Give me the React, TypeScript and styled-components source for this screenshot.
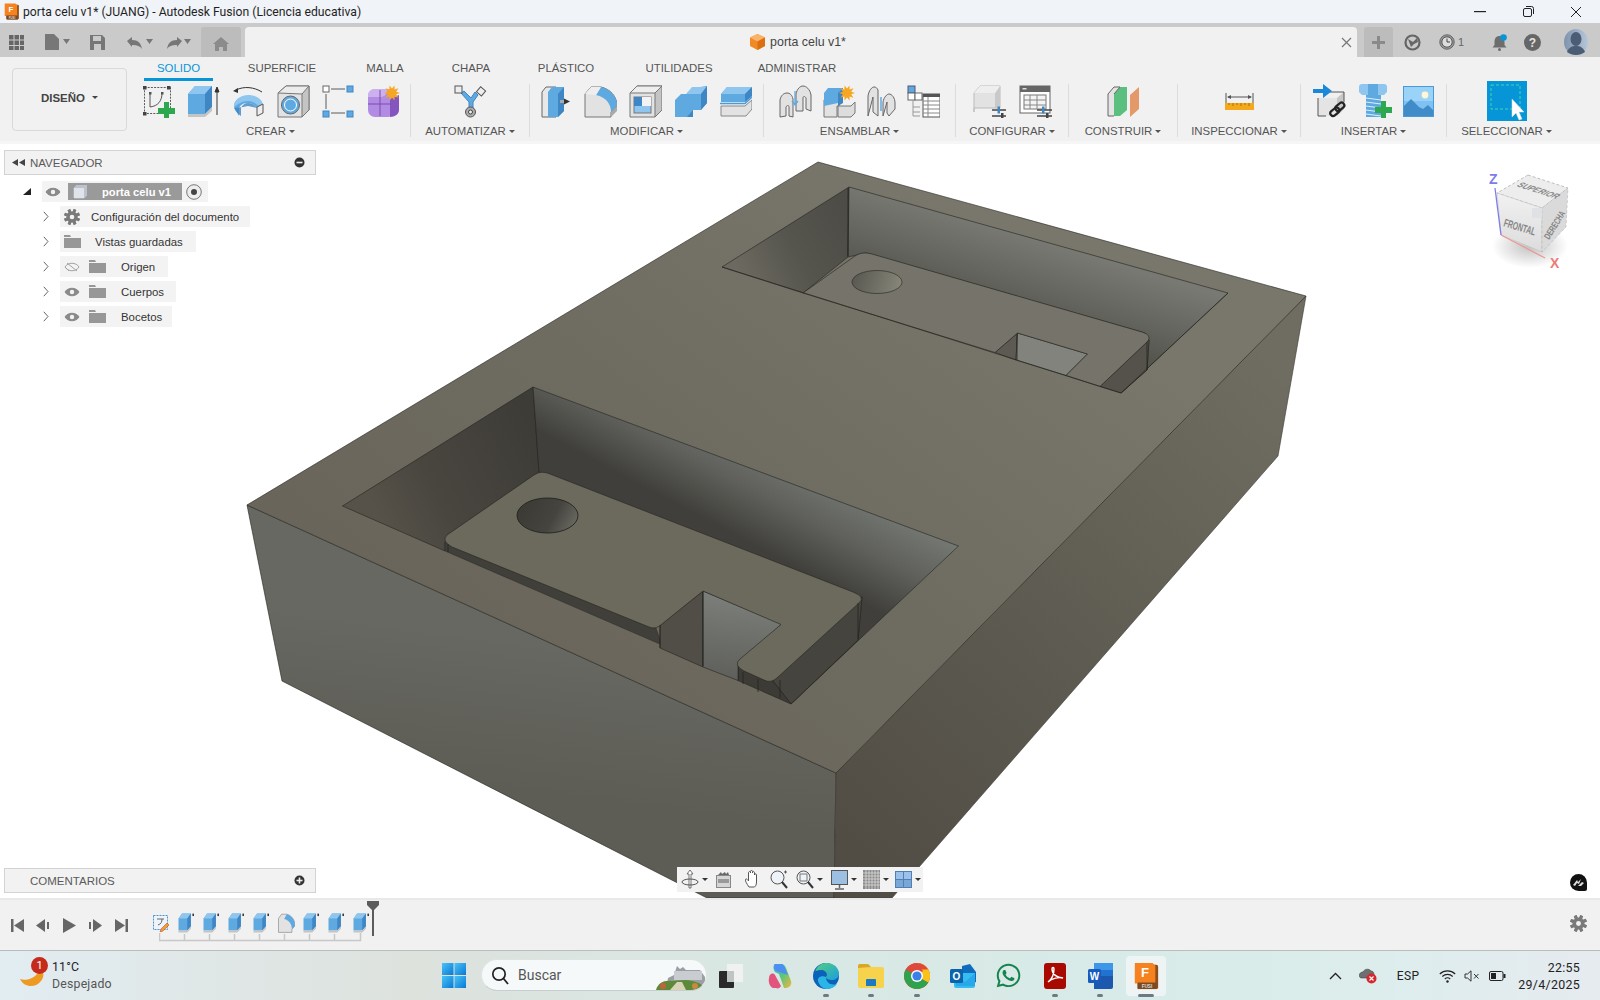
import React from "react";
import styled, { createGlobalStyle } from "styled-components";
import { FaWhatsapp } from "react-icons/fa";

const Global = createGlobalStyle`
  html, body { margin: 0; padding: 0; background: #fff; overflow: hidden; }
  * { box-sizing: border-box; }
  #root { width: 1600px; height: 1000px; }
`;
const Shell = styled.div`
  width: 1600px; height: 1000px; display: flex; flex-direction: column;
  font-family: "Liberation Sans", Arial, sans-serif; color: #444;
`;
const Title = styled.div`
  height: 23px; flex: none; background: #f0f3f7; display: flex; align-items: center; padding-left: 3px;
`;
const TitleText = styled.span`
  font: 12.2px/16px Roboto, sans-serif; color: #1f1f1f; margin-left: 3px;
`;
const WinButtons = styled.div`margin-left: auto; display: flex;`;
const WinButton = styled.div`width: 48px; height: 23px; display: flex; align-items: center; justify-content: center;`;
const TabStrip = styled.div`
  height: 34px; flex: none; background: #cacaca; padding-top: 4px; display: flex; align-items: stretch;
`;
const QuickIcons = styled.div`width: 201px; flex: none; display: flex; align-items: center; padding-left: 9px;`;
const Quick = styled.span<{ $w: number }>`width: ${p => p.$w}px; flex: none; display: flex; align-items: center;`;
const HomeTab = styled.div`width: 40px; flex: none; background: #bcbcbc; border-radius: 3px 3px 0 0; display: flex; align-items: center; justify-content: center; padding-top: 3px;`;
const DocTab = styled.div`
  margin-left: 4px; width: 1112px; flex: none; background: #f1f1f1; border-radius: 4px 4px 0 0; display: flex;
  align-items: center; justify-content: center; position: relative; padding-right: 6px;
`;
const DocName = styled.span`font-size: 12.4px; color: #444; margin-left: 5px;`;
const DocClose = styled.span`position: absolute; right: 5px; top: 10px; display: flex;`;
const PlusTab = styled.div`width: 29px; flex: none; margin-left: 7px; background: #bcbcbc; border-radius: 3px 3px 0 0; display: flex; align-items: center; justify-content: center;`;
const StatusIcons = styled.div`flex: 1; display: flex; align-items: center;`;
const StatusSlot = styled.span<{ $w: number; $pad?: number }>`
  width: ${p => p.$w}px; flex: none; display: flex; align-items: center; font-size: 11px; color: #666;
  ${p => (p.$pad !== undefined ? `padding-left: ${p.$pad}px;` : "justify-content: center;")}
`;
const Toolbar = styled.div`
  height: 87px; flex: none; background: #f1f1f1; display: flex; border-bottom: 3px solid #f6f6f6;
`;
const DesignButton = styled.div`
  margin: 11px 0 0 12px; width: 115px; height: 63px; flex: none; border: 1px solid #d9d9d9; border-radius: 4px; padding-bottom: 4px;
  display: flex; align-items: center; justify-content: center; gap: 7px; font-size: 11.5px; font-weight: 700; color: #444;
`;
const ToolArea = styled.div`margin-left: 4px; display: flex; flex-direction: column;`;
const ModeTabs = styled.div`height: 24px; display: flex; padding-left: 13px;`;
const ModeTab = styled.div<{ $w: number; $on?: boolean }>`
  width: ${p => p.$w}px; height: 24px; text-align: center; font-size: 11.4px; line-height: 23px;
  color: ${p => (p.$on ? "#0696d7" : "#555")}; border-bottom: 3px solid ${p => (p.$on ? "#0696d7" : "transparent")};
`;
const Groups = styled.div`display: flex; align-items: flex-start;`;
const Group = styled.div<{ $w: number; $last?: boolean }>`
  width: ${p => p.$w}px; height: 53px; margin-top: 3px; display: flex; flex-direction: column; align-items: center; flex: none;
  border-right: 1px solid ${p => (p.$last ? "transparent" : "#dcdcdc")};
`;
const IconRow = styled.div<{ $gap?: number }>`
  flex: none; height: 40px; margin-top: -3px; display: flex; align-items: center; gap: ${p => p.$gap ?? 12}px;
`;
const GroupLabel = styled.div`
  flex: none; margin-top: 3px; height: 14px; font-size: 11.4px; line-height: 14px; color: #555; display: flex; align-items: center; gap: 3px; white-space: nowrap;
`;
const Caret = styled.i<{ $c?: string; $s?: number }>`
  display: inline-block; width: 0; height: 0; flex: none; border-style: solid;
  border-width: ${p => p.$s ?? 4}px ${p => (p.$s ?? 4) - 0.5}px 0 ${p => (p.$s ?? 4) - 0.5}px;
  border-color: ${p => p.$c ?? "#555"} transparent transparent transparent;
`;
const Viewport = styled.div`flex: 1; position: relative; background: #fff; overflow: hidden;`;
const ModelSvg = styled.svg`position: absolute; left: 0; top: 0; display: block;`;
const PanelBar = styled.div<{ $bottom?: boolean }>`
  position: absolute; left: 4px; width: 312px; height: 25px; background: #f2f2f2; border: 1px solid #d3d3d3;
  display: flex; align-items: center; padding: 0 10px 0 7px; font-size: 11.5px; color: #5a5a5a;
  ${p => (p.$bottom ? "bottom: 5px;" : "top: 6px;")}
`;
const PanelTitle = styled.span<{ $pad: number }>`margin-left: ${p => p.$pad}px; flex: 1;`;
const Tree = styled.div`position: absolute; left: 20px; top: 37px; display: flex; flex-direction: column;`;
const TreeLine = styled.div`height: 25px; display: flex; align-items: flex-start; padding-left: 23px;`;
const TreeRootLine = styled(TreeLine)`padding-left: 2px;`;
const Expander = styled.span<{ $w: number }>`width: ${p => p.$w}px; height: 21px; display: flex; align-items: center; flex: none;`;
const TreeChip = styled.div<{ $w: number }>`
  width: ${p => p.$w}px; height: 21px; background: #f3f3f3; display: flex; align-items: center; font-size: 11.4px; color: #333; padding-left: 4px; flex: none;
`;
const ChipSlot = styled.span<{ $w: number; $start?: boolean }>`
  width: ${p => p.$w}px; flex: none; display: flex; align-items: center; justify-content: ${p => (p.$start ? "flex-start" : "center")};
`;
const ChipLabel = styled.span<{ $m: number }>`margin-left: ${p => p.$m}px; white-space: nowrap;`;
const Selected = styled.div`
  width: 114px; height: 17px; background: #9a9a9a; color: #fff; font-weight: 700; font-size: 11.2px; flex: none;
  display: flex; align-items: center; padding-left: 5px; margin-left: 8px;
`;
const Cube = styled.div`position: absolute; left: 1484px; top: 14px; width: 116px; height: 130px;`;
const NavBar = styled.div`
  position: absolute; left: 677px; top: 723px; width: 246px; height: 25px; background: #f2f2f2; display: flex; align-items: center; padding-left: 4px;
`;
const NavSlot = styled.span<{ $w: number }>`width: ${p => p.$w}px; flex: none; display: flex; align-items: center; gap: 3px;`;
const Bubble = styled.div`position: absolute; left: 1570px; top: 730px; width: 17px; height: 17px; background: #111; border-radius: 50% 50% 2px 50%; display: flex; align-items: center; justify-content: center;`;
const Timeline = styled.div`
  height: 52px; flex: none; background: #f1f1f1; border-top: 2px solid #e9e9e9; display: flex; align-items: center; position: relative;
`;
const Controls = styled.div`display: flex; width: 149px; padding-left: 4px; flex: none;`;
const ControlBtn = styled.span`width: 26px; height: 26px; flex: none; display: flex; align-items: center; justify-content: center;`;
const Track = styled.div`position: relative; display: flex; height: 36px; align-items: flex-start; padding-top: 5px; margin-top: 2px;`;
const TrackItem = styled.span`width: 25px; height: 20px; flex: none; display: flex; align-items: center; justify-content: center;`;
const Ruler = styled.svg`position: absolute; left: 10px; top: 25px;`;
const Marker = styled.svg`position: absolute; left: 217px; top: -7px;`;
const TimelineGear = styled.span`position: absolute; right: 13px; top: 15px; display: flex;`;
const Taskbar = styled.div`
  height: 50px; flex: none; display: flex; align-items: stretch; border-top: 1px solid #b9bebd;
  background: linear-gradient(90deg, #e2edf2 0%, #e0e8e9 10%, #dde2dd 26%, #d9e7e3 45%, #d8ebe8 70%, #dcedec 85%, #e6ebf0 100%);
`;
const Weather = styled.div`width: 431px; flex: none; padding-left: 20px; display: flex; align-items: center; position: relative;`;
const WeatherText = styled.div`margin-left: 7px; font: 12.3px/17px Roboto, sans-serif; color: #222; letter-spacing: .2px;`;
const WeatherSub = styled.div`color: #555;`;
const WeatherBadge = styled.span`
  position: absolute; left: 31px; top: 6px; width: 17px; height: 17px; border-radius: 50%; background: #c42b1c; color: #fff;
  font: 11px/17px Roboto, sans-serif; text-align: center;
`;
const TaskCell = styled.span<{ $w: number; $active?: boolean }>`
  width: ${p => p.$w}px; flex: none; position: relative; display: flex; align-items: center; justify-content: center;
  ${p => (p.$active ? "&::before{content:'';position:absolute;left:3px;right:3px;top:5px;bottom:4px;background:#eef4f4;border-radius:4px;}" : "")}
  & > * { position: relative; }
`;
const RunDot = styled.i<{ $w?: number }>`
  position: absolute !important; bottom: 3px; left: 50%; width: ${p => p.$w ?? 6}px; margin-left: ${p => -(p.$w ?? 6) / 2}px; height: 3px; border-radius: 2px; background: #6e7a82;
`;
const Search = styled.div`
  width: 226px; flex: none; margin: 8px 0 9px 4px; background: #f5f9f9; border-radius: 16px; border: 1px solid #dde5e4; border-bottom-color: #c6cfcd;
  display: flex; align-items: center; padding-left: 9px; position: relative; overflow: hidden;
`;
const SearchText = styled.span`margin-left: 9px; font: 14px Roboto, sans-serif; color: #555;`;
const SearchArt = styled.svg`position: absolute; right: 0; bottom: 0;`;
const TaskGap = styled.span`width: 2px; flex: none;`;
const Tray = styled.div`flex: 1; display: flex; align-items: center; padding-left: 154px; min-width: 0;`;
const TraySlot = styled.span<{ $w: number; $m?: number }>`
  width: ${p => p.$w}px; margin-left: ${p => p.$m ?? 0}px; flex: none; display: flex; align-items: center; justify-content: center;
  font: 12px Roboto, sans-serif; color: #222; letter-spacing: .4px;
`;
const Clock = styled.div`flex: 1; text-align: right; padding-right: 20px; font: 12.4px/17px Roboto, sans-serif; color: #222; letter-spacing: .3px;`;
const WordMark = styled.text`font: 700 10px "Liberation Sans", sans-serif;`;

const I: React.FC<{ w?: number; h?: number; vb?: string; stretch?: boolean; children: React.ReactNode }> = ({ w = 33, h = 33, vb, stretch, children }) => (
  <svg width={w} height={h} viewBox={vb ?? `0 0 ${w} ${h}`} preserveAspectRatio={stretch ? "none" : undefined} style={{ flex: "none", display: "block" }}>{children}</svg>
);
const B = "#5fa9e1", BD = "#3f86c4", BL = "#8fc6ef", G1 = "#e2e2e2", G2 = "#c4c4c4", G3 = "#a9a9a9", S = "#5b5b5b";

const SketchI = () => <I>
  <rect x="2.5" y="2.5" width="26" height="26" fill="none" stroke={S} strokeDasharray="2 1.2" />
  {[[1,1],[25,1],[1,27]].map(([x,y],k)=><rect key={k} x={x} y={y} width="3.5" height="3.5" fill="#444"/>)}
  <rect x="7" y="7" width="2.5" height="2.5" fill="#555"/><rect x="19" y="7" width="2.5" height="2.5" fill="#555"/>
  <path d="M8 8v14M8 22c8-1 12-6 12-14" fill="none" stroke="#555"/>
  <path d="M22 17h5v6h6v6h-6v4h-5v-4h-6v-6h6z" fill="#2ea84f"/>
</I>;
const ExtrudeI = () => <I>
  <path d="M1 29V9l7-8h17v21l-7 7z" fill={B}/><path d="M1 9l7-8h17l-7 8z" fill={BL}/><path d="M18 9l7-8v21l-7 7z" fill={BD}/>
  <path d="M1 29h17l7-7v4l-7 6H1z" fill={G2}/>
  <path d="M30 30V3M28 7l2-5 2 5z" stroke="#333" fill="#333"/>
</I>;
const RevolveI = () => <I>
  <path d="M2 22c0-7 6-11 14-11s14 4 14 10l-5 2c-2-3-5-5-9-5s-7 1-9 5v8z" fill={B}/>
  <path d="M2 22c-1-6 6-12 14-12 7 0 13 3 15 9l-5 2c-2-3-6-5-10-5-6 0-10 3-14 6z" fill={BL}/>
  <path d="M2 23c2 4 4 6 7 8l0-8c1-3 4-5 7-5 4 0 7 2 9 5v0l-9-2-5 1z" fill={BD} opacity=".8"/>
  <path d="M25 22l6-3v9l-6 3z" fill="#eee" stroke="#555"/>
  <path d="M4 5c8-4 18-3 26 2" fill="none" stroke="#333"/><path d="M1 6l5-3v5z" fill="#333"/>
</I>;
const HoleI = () => <I>
  <path d="M1 8l8-7h23v24l-7 7H1z" fill={G1} stroke="#777"/><path d="M25 8l7-7v24l-7 7z" fill={G2} stroke="#777"/><path d="M1 8l8-7h23l-7 8z" fill="#ececec" stroke="#777"/>
  <circle cx="13.5" cy="20" r="9" fill={B} stroke="#666"/><path d="M12 12a9 9 0 0 1 9 11 9 9 0 0 0-9-11z" fill="#eee"/><circle cx="13.5" cy="20" r="6" fill="none" stroke="#fff"/>
</I>;
const NodesI = () => <I>
  <path d="M9 4h14M4 9v15M9 28h14" stroke={S}/>
  <rect x="1" y="1" width="6" height="6" fill="#fff" stroke="#666"/>
  <rect x="25" y="1" width="6" height="6" fill={B} stroke={BD}/><rect x="1" y="26" width="6" height="6" fill={B} stroke={BD}/><rect x="25" y="26" width="6" height="6" fill={B} stroke={BD}/>
</I>;
const Star = ({ x, y, r = 7, c = "#f5a623" }: { x: number; y: number; r?: number; c?: string }) => {
  const pts = Array.from({ length: 20 }, (_, k) => { const a = k * Math.PI / 10; const q = k % 2 ? r * .55 : r; return `${x + q * Math.cos(a)},${y + q * Math.sin(a)}`; }).join(" ");
  return <polygon points={pts} fill={c} />;
};
const FormI = () => <I>
  <rect x="1" y="4" width="27" height="28" rx="7" fill="#b28ce2"/><path d="M1 11c0-5 3-7 8-7h12c-1 6-4 8-8 8H1z" fill="#cdb1ee"/><path d="M23 14l9-4v15c0 4-4 7-9 7z" fill="#8555bf"/>
  <path d="M1 19h23M13 5v26" stroke="#7a4bb0"/><Star x={25} y={8} r={8}/>
</I>;
const AutoI = () => <I>
  <path d="M7 8l8 9v7h4v-7l5-7-3-3-4 6-7-7z" fill={B} stroke={BD}/>
  <rect x="1" y="1" width="7" height="7" fill="#eee" stroke="#555"/><rect x="24" y="3" width="6.5" height="6.5" fill="#eee" stroke="#555" transform="rotate(40 27 6)"/>
  <circle cx="16.5" cy="27" r="5" fill="#aaa" stroke="#555"/><circle cx="16.5" cy="27" r="2" fill="#eee" stroke="#444"/>
</I>;
const PressI = () => <I w={31}>
  <path d="M1 32V7l4-5h10v30z" fill="#e8e8e8" stroke="#666"/><path d="M7 32V7l4-5h12v24l-6 6z" fill={B}/><path d="M17 9l6-7v24l-6 6z" fill={BD}/>
  <rect x="19" y="15" width="7" height="3" fill="#aaa"/><path d="M23 13.5l6 3-6 3z" fill="#333"/>
</I>;
const FilletI = () => <I>
  <path d="M1 32V9l6-7h10c9 2 16 9 16 19l-6 6v5z" fill={G1} stroke="#777"/>
  <path d="M17 2c9 2 16 9 16 19l-6 6c0-8-5-15-15-17z" fill={B}/><path d="M27 27v5l6-6v-5z" fill={G3}/><path d="M1 9l6-7h10l-5 8z" fill="#eee"/>
</I>;
const ShellI = () => <I>
  <path d="M1 8l7-7h25v24l-7 7H1z" fill={G1} stroke="#777"/><path d="M26 8l7-7v24l-7 7z" fill={G2} stroke="#777"/><path d="M1 8l7-7h25l-7 7z" fill="#eee" stroke="#777"/>
  <rect x="5" y="12" width="17" height="16" fill={BL} stroke="#777"/><path d="M5 12h8v9H5v7z" fill={BD}/><rect x="13" y="12" width="9" height="9" fill="#f3f3f3"/>
</I>;
const CombineI = () => <I>
  <path d="M1 32V15l6-6h11V2h8l7-1v17l-6 7H19v7z" fill={B}/><path d="M12 9l6-7h15l-6 7z" fill={BL}/><path d="M27 9l6-8v17l-6 7zM13 32l6-7v7z" fill={BD}/>
</I>;
const SplitI = () => <I>
  <path d="M2 9l6-7h25v9l-7 6H2z" fill={B}/><path d="M2 9l6-7h25l-7 7z" fill={BL}/><path d="M26 9l7-7v9l-7 6z" fill={BD}/>
  <path d="M2 21h24l7-6v9l-6 7H2z" fill={G1} stroke="#888"/><path d="M1 18.5h25l7-6.5" fill="none" stroke="#4a9ad8" strokeWidth="1.4"/>
</I>;
const JointBase = () => <>
  <path d="M1 32V15c1-5 4-7 7-7s5 2 6 6v18l-4-1v-9c0-2-2-2-3 0v9z" fill={G1} stroke="#666"/>
  <path d="M17 26V9c1-5 4-8 7-8 3 0 7 3 8 9v16l-5-2V13c-1-2-3-2-3 0v13z" fill={G1} stroke="#666"/>
</>;
const JointI = () => <I><JointBase/><path d="M16 6v13M13 16l3 4 3-4" stroke={B} fill="none" strokeWidth="1.3"/></I>;
const NewCompI = () => <I>
  <path d="M1 32V15l4-5h11v11h-2v11z" fill={G1} stroke="#777"/><path d="M15 32V21h13l4-4v11l-4 4z" fill="#ddd" stroke="#777"/>
  <path d="M1 21V8l4-5h15v15h-5z" fill={B}/><path d="M15 8l5-5v15l-5 3z" fill={BD}/><Star x={24} y={8} r={8}/>
</I>;
const RigidI = () => <I w={29}>
  <path d="M1 31V11c1-6 4-9 6-9s3 1 4 3v26l-5-4V12z" fill={G1} stroke="#666"/>
  <path d="M16 31V17c1-5 4-8 6-8 3 0 6 4 6 9v6l-6 7-2-3V17z" fill={G1} stroke="#666"/><path d="M14 12v14" stroke={B} strokeWidth="1.5"/>
</I>;
const TableI = () => <I>
  <rect x="1" y="1" width="7" height="7" fill={B} stroke="#557"/><rect x="1" y="8" width="7" height="7" fill="#fff" stroke="#666"/><rect x="8" y="8" width="7" height="7" fill="#fff" stroke="#666"/>
  <path d="M6 15v16h7M6 22h7M6 27h7" fill="none" stroke="#999"/>
  <rect x="16" y="9" width="17" height="23" fill="#fff" stroke="#555"/><rect x="16" y="9" width="17" height="3" fill="#555"/><path d="M16 16h17M16 20h17M16 24h17M16 28h17M21 12v20" stroke="#888"/>
</I>;
const ParamI = () => <I>
  <path d="M1 27V8l6-7h20v22H1z" fill="#e2e2e2" stroke="#bbb"/><path d="M22 8l5-7v22h-5z" fill="#c9c9c9"/><path d="M1 8l6-7h20l-5 7z" fill="#eee"/>
  <path d="M19 25h15M19 31h15" stroke="#444" strokeWidth="1.4"/><rect x="24.5" y="21.5" width="2.5" height="7" fill={BD}/><rect x="28" y="28" width="2.5" height="5" fill="#444"/>
</I>;
const ParamTableI = () => <I>
  <rect x="1" y="1" width="30" height="27" fill="#fff" stroke="#666"/><rect x="1" y="1" width="30" height="6" fill="#666"/><rect x="3.5" y="3" width="4" height="1.5" fill="#ddd"/>
  <rect x="5" y="10" width="22" height="14" fill="#f4f4f4" stroke="#777"/><path d="M5 15h22M5 20h22M11 10v14M18 10v14" stroke="#888"/>
  <path d="M18 25h15M18 31h15" stroke="#444" strokeWidth="1.4"/><rect x="23" y="21.5" width="2.5" height="7" fill={BD}/><rect x="27" y="28" width="2.5" height="5" fill="#444"/>
</I>;
const PlaneI = () => <I>
  <path d="M1 31V9l6-7h6v22l-6 7z" fill="#e4e4e4" stroke="#666"/><path d="M7 31V9h0l6-7h7v23l-7 6z" fill="#5bbf7f"/><path d="M7 9l6-7" stroke="#666"/>
  <path d="M23 32V10l9-8v22z" fill="#e49a68"/>
</I>;
const MeasureI = () => <I w={29} h={18}>
  <path d="M1 1v10M28 1v10M3 5h23" stroke="#555"/><path d="M2 5l4-2v4zM27 5l-4-2v4z" fill="#555"/>
  <rect x="0" y="11" width="29" height="7" fill="#f5a81c"/><path d="M4 11v2M8 11v3M12 11v2M16 11v3M20 11v2M24 11v3" stroke="#8a5a00" strokeWidth=".7"/>
</I>;
const LinkI = () => <I w={35} h={34}>
  <path d="M5 32V14l7-6h19v17l-7 7z" fill="#e4e4e4"/><path d="M5 14l7-6h19l-7 6z" fill="#f0f0f0"/><path d="M24 14l7-6v17l-7 7z" fill="#c7c7c7"/><path d="M5 14v18h8" fill="none" stroke="#555"/><path d="M12 8h19v10" fill="none" stroke="#555"/>
  <path d="M0 5h10V0l9 7-9 7V9H0z" fill="#1b87d8"/>
  <g fill="none" stroke="#222" strokeWidth="2.2"><rect x="17" y="25" width="10" height="5.5" rx="2.7" transform="rotate(-40 22 28)"/><rect x="22" y="20" width="10" height="5.5" rx="2.7" transform="rotate(-40 27 23)"/></g>
</I>;
const BoltI = () => <I h={34}>
  <path d="M0 3q0-3 3-3h22q3 0 3 3v5l-3 3H3l-3-3z" fill={BL}/><path d="M9 0h10v11H9z" fill={B}/><rect x="7" y="11" width="15" height="22" fill={B}/>
  <path d="M7 14l15 2M7 18l15 2M7 22l15 2M7 26l15 2M7 30l15 2" stroke="#dcefff"/><path d="M22 17h5v6h6v6h-6v5h-5v-5h-6v-6h6z" fill="#2ea84f"/>
</I>;
const PictureI = () => <I w={31} h={31}>
  <rect width="31" height="31" fill="#7fc1f2"/><rect y="0" width="31" height="15" fill="#9bd2f8"/><circle cx="22" cy="9" r="3.4" fill="#fff7d5"/>
  <path d="M0 31V21l8-8 8 8 4 2 5-4 6 6v6z" fill="#3f8cc9"/><rect x=".5" y=".5" width="30" height="30" fill="none" stroke="#4a9ad8"/>
</I>;
const SelectI = () => <I w={40} h={40}>
  <rect width="40" height="40" fill="#0696d7"/><rect x="4" y="4" width="29" height="24" fill="none" stroke="#46d3b0" strokeDasharray="3 2"/>
  <path d="M25 18v18l4-4 3 7 3-1-3-7h5z" fill="#fff" stroke="#ddd" strokeWidth=".5"/>
</I>;

const Eye = ({ off, c = "#8a8a8a" }: { off?: boolean; c?: string }) => <I w={16} h={10}>
  <path d="M1 5c3-5 11-5 14 0-3 5-11 5-14 0z" fill={off ? "none" : c} stroke={off ? "#a4a4a4" : c}/>
  {off ? <path d="M3 1l10 8M1 5l4 4" stroke="#a4a4a4" fill="none"/> : <circle cx="8" cy="5" r="2.2" fill="#f3f3f3"/>}
</I>;
const Folder = () => <I w={17} h={13}><path d="M0 0h6l1 2h10v11H0z" fill="#979797"/><rect y="2" width="17" height="1" fill="#f3f3f3"/></I>;
const Chev = () => <I w={6} h={11}><path d="M.8 .8l4.2 4.7-4.2 4.7" fill="#fff" stroke="#555" strokeWidth=".9"/></I>;
const Gear = ({ s = 16, c = "#7a7a7a" }: { s?: number; c?: string }) => {
  const teeth = Array.from({ length: 8 }, (_, k) => <rect key={k} x="6.6" y="0" width="2.8" height="16" fill={c} transform={`rotate(${k * 45 + 22} 8 8)`} />);
  return <I w={s} h={s} vb="0 0 16 16">{teeth}<circle cx="8" cy="8" r="5.6" fill={c}/><circle cx="8" cy="8" r="2.3" fill="#f2f2f2"/></I>;
};
const CircleBtn = ({ plus }: { plus?: boolean }) => <I w={11} h={11}><circle cx="5.5" cy="5.5" r="5" fill="#333"/><rect x="2.5" y="4.7" width="6" height="1.6" fill="#eee"/>{plus && <rect x="4.7" y="2.5" width="1.6" height="6" fill="#eee"/>}</I>;
const FilletShapes = () => <><path d="M1 32V9l6-7h10c9 2 16 9 16 19l-6 6v5z" fill={G1} stroke="#777"/><path d="M17 2c9 2 16 9 16 19l-6 6c0-8-5-15-15-17z" fill={B}/></>;
const Mini = ({ fillet }: { fillet?: boolean }) => <I w={17} h={20} vb="0 0 33 33" stretch>
  {fillet ? <FilletShapes/> : <><path d="M1 29V9l7-8h17v21l-7 7z" fill={B}/><path d="M1 9l7-8h17l-7 8z" fill={BL}/><path d="M18 9l7-8v21l-7 7z" fill={BD}/><path d="M1 29h17l7-7v4l-7 6H1z" fill={G2}/><rect x="28" y="1" width="3" height="4" fill="#333"/></>}
</I>;

const Model = () => (
  <ModelSvg width="1600" height="754" viewBox="0 144 1600 754">
    <defs>
      <linearGradient id="top" gradientUnits="userSpaceOnUse" x1="950" y1="200" x2="560" y2="720">
        <stop offset="0" stopColor="#79776c"/><stop offset=".55" stopColor="#6e6c61"/><stop offset="1" stopColor="#6a655a"/>
      </linearGradient>
      <linearGradient id="lf" gradientUnits="userSpaceOnUse" x1="520" y1="640" x2="500" y2="790">
        <stop offset="0" stopColor="#676862"/><stop offset="1" stopColor="#5d5c55"/>
      </linearGradient>
      <linearGradient id="rf" gradientUnits="userSpaceOnUse" x1="1290" y1="380" x2="850" y2="850">
        <stop offset="0" stopColor="#6f6c61"/><stop offset=".6" stopColor="#5c5950"/><stop offset="1" stopColor="#514d45"/>
      </linearGradient>
      <linearGradient id="back1" gradientUnits="userSpaceOnUse" x1="770" y1="445" x2="725" y2="530">
        <stop offset="0" stopColor="#757873"/><stop offset=".5" stopColor="#5f605b"/><stop offset="1" stopColor="#403f3b"/>
      </linearGradient>
      <linearGradient id="left1" gradientUnits="userSpaceOnUse" x1="375" y1="510" x2="535" y2="430">
        <stop offset="0" stopColor="#565249"/><stop offset=".35" stopColor="#494640"/><stop offset="1" stopColor="#3e3c37"/>
      </linearGradient>
      <linearGradient id="back2" gradientUnits="userSpaceOnUse" x1="1040" y1="240" x2="1015" y2="320">
        <stop offset="0" stopColor="#787972"/><stop offset=".6" stopColor="#63645d"/><stop offset="1" stopColor="#54544d"/>
      </linearGradient>
      <linearGradient id="left2" gradientUnits="userSpaceOnUse" x1="740" y1="275" x2="850" y2="220">
        <stop offset="0" stopColor="#6c6a60"/><stop offset=".5" stopColor="#55544d"/><stop offset="1" stopColor="#4d4c46"/>
      </linearGradient>
      <linearGradient id="notch" gradientUnits="userSpaceOnUse" x1="730" y1="590" x2="720" y2="680">
        <stop offset="0" stopColor="#7d807c"/><stop offset="1" stopColor="#5e5f5a"/>
      </linearGradient>
      <linearGradient id="hole" gradientUnits="userSpaceOnUse" x1="520" y1="500" x2="575" y2="530">
        <stop offset="0" stopColor="#3a3934"/><stop offset=".6" stopColor="#45443f"/><stop offset="1" stopColor="#6c6c64"/>
      </linearGradient>
      <linearGradient id="hole2" gradientUnits="userSpaceOnUse" x1="855" y1="275" x2="900" y2="290">
        <stop offset="0" stopColor="#5b5a52"/><stop offset="1" stopColor="#878679"/>
      </linearGradient>
    </defs>
    <g stroke="#23231f" strokeWidth=".6" strokeLinejoin="round">
      <polygon points="247,505 836,773 834,898 707,898 282,681" fill="url(#lf)"/>
      <polygon points="836,773 1306,296 1278,456 892,898 834,898" fill="url(#rf)" stroke="#3a3831"/>
      <polygon points="818,162 1306,296 836,773 247,505" fill="url(#top)"/>

      <polygon points="533,387 342.5,506 445,551 445,542 539,472" fill="url(#left1)"/>
      <polygon points="533,387 958.5,546 791,704 858,640 862,597 539,472" fill="url(#back1)"/>
      <polygon points="445,542 656,628 662,645 445,551" fill="#403f3a" strokeWidth=".4"/>
      <polygon points="862,597 858,640 791,704 773,681" fill="#46443e"/>
      <polygon points="738,665 773,681 791,704 738,680.5" fill="#3c3b36"/>
      <polygon points="703,591 660,625 660,648 703,667" fill="#504e47"/>
      <polygon points="703,591 782,624 738,665 738,680.5 703,667" fill="url(#notch)"/>
      <path d="M550,474 L853,592 Q866,597 859,603 L778,677 Q771,684 764,680 L744,671 Q733,665 740,659 L781,624.5 L703,591 L662,624 Q656,630 649,627 L452,547 Q441,541 447,535 L534,475 Q541,470 550,474 Z" fill="#6c695d"/>
      <path d="M703,592V666M660,625v23M743,672v12M758,679v13M780,680v18M858,603v36M448,544v8" fill="none" strokeWidth=".8"/>
      <ellipse cx="547.5" cy="515.5" rx="30.5" ry="17.5" fill="url(#hole)" strokeWidth=".9"/>

      <polygon points="849,187 722,267 803,293 848,257" fill="url(#left2)"/>
      <polygon points="849,187 1228,293 1121,393 1147,370 1149,340 1145,333 866,253 848,257" fill="url(#back2)"/>
      <polygon points="1149,340 1147,370 1121,393 1100,386.5" fill="#54524b"/>
      <polygon points="1017.5,333 995,352.5 1016,360" fill="#5c5a53"/>
      <polygon points="1017.5,333 1087.5,354 1066,375.5 1016,360" fill="#81837c"/>
      <path d="M803,293 L855,256 Q862,251 872,254 L1142,332 Q1152,335 1148,341 L1100,386.5 L1066,375.5 L1087.5,354 L1017.5,333 L995,352.5 Z" fill="#75736a"/>
      <polyline points="722,267 1121,393 1228,293" fill="none"/>
      <path d="M848,188V256M1017,334v26M1147,342v28" fill="none" strokeWidth=".8"/>
      <ellipse cx="877" cy="282" rx="25" ry="11.5" fill="url(#hole2)"/>
    </g>
  </ModelSvg>
);

const ViewCube = () => (
  <Cube>
    <svg width="116" height="130" viewBox="1484 158 116 130">
      <defs>
        <radialGradient id="shd"><stop offset="0" stopColor="#777" stopOpacity=".45"/><stop offset="1" stopColor="#777" stopOpacity="0"/></radialGradient>
        <linearGradient id="cf" x1="0" y1="0" x2="0" y2="1"><stop offset="0" stopColor="#f1f1f1"/><stop offset="1" stopColor="#dcdcdc"/></linearGradient>
      </defs>
      <ellipse cx="1530" cy="246" rx="38" ry="22" fill="url(#shd)"/>
      <polygon points="1528,175 1568,188 1542,208 1497,193" fill="#ededed" stroke="#999" strokeDasharray="3 2" strokeWidth=".6"/>
      <polygon points="1497,193 1542,208 1542,252 1501,235" fill="url(#cf)" stroke="#bbb" strokeWidth=".5"/>
      <polygon points="1542,208 1568,188 1566,227 1542,252" fill="#dadada" stroke="#aaa" strokeDasharray="3 2" strokeWidth=".5"/>
      <rect x="1532" y="208" width="10" height="10" fill="#dfe1e4"/>
      <path d="M1495 188L1501 235" stroke="#7d7de8" strokeWidth="1.3"/>
      <path d="M1501 235L1545 258" stroke="#ea9a96" strokeWidth="1.3"/>
      <text x="1489" y="184" fontFamily="Liberation Sans" fontSize="14" fill="#7d7de8" fontWeight="700">Z</text>
      <text x="1550" y="268" fontFamily="Liberation Sans" fontSize="14" fill="#ea7d76" fontWeight="700">X</text>
      <text transform="translate(1516 186) rotate(18) skewX(-38)" fontFamily="Liberation Sans" fontSize="8" fontWeight="700" fill="#8a8a8a">SUPERIOR</text>
      <text transform="translate(1503 226) rotate(17) scale(.82 1.3)" fontFamily="Liberation Sans" fontSize="8.5" fontWeight="700" fill="#858585">FRONTAL</text>
      <text transform="translate(1549 240) rotate(-58) scale(.75 1.1)" fontFamily="Liberation Sans" fontSize="8.5" fontWeight="700" fill="#858585">DERECHA</text>
    </svg>
  </Cube>
);

const NavIcons = {
  Orbit: () => <I w={18} h={20}><path d="M9 0l3 4h-2v14h-2V4H6z" fill="#fff" stroke="#555" strokeWidth=".8"/><ellipse cx="9" cy="12" rx="8" ry="3" fill="none" stroke="#555"/></I>,
  Look: () => <I w={15} h={17}><path d="M2 4l3-3 1 2 3-2 1 2 2-2 1 3z" fill="#666"/><rect x=".5" y="4.5" width="14" height="12" fill="#d5d5d5" stroke="#888"/><rect x="2" y="8" width="11" height="4" fill="#999"/></I>,
  Hand: () => <I w={17} h={19}><path d="M5 17C3 14 1 11 1.5 9.500s2 0 3 1.500V3c0-2 2-2 2 0v-1.500c0-1.500 2-1.500 2 0V3c0-2 2-2 2 0v2c0-1.500 2-1.500 2 0v7c0 3-1 4-2 5z" fill="#fff" stroke="#555"/></I>,
  Zoom: () => <I w={18} h={19}><circle cx="7.500" cy="7.500" r="6.500" fill="#eef3f7" stroke="#555"/><path d="M12 12l5 6" stroke="#333" strokeWidth="2"/><path d="M14 2h3M15.500 .5v3" stroke="#555"/></I>,
  Fit: () => <I w={18} h={19}><circle cx="7.500" cy="7.500" r="6.500" fill="#eef3f7" stroke="#555"/><rect x="4" y="4" width="7" height="7" fill="none" stroke="#777"/><path d="M12 12l5 6" stroke="#333" strokeWidth="2"/></I>,
  Display: () => <I w={17} h={20}><rect x=".5" y=".5" width="16" height="14" fill="#9cbfe2" stroke="#555"/><path d="M8.500 15v3M4 19h9" stroke="#666" strokeWidth="1.5"/></I>,
  Grid: () => <I w={17} h={19}><rect width="17" height="19" fill="#8b8b8b"/><path d="M0 3h17M0 6h17M0 9h17M0 12h17M0 15h17M3 0v19M6 0v19M9 0v19M12 0v19M15 0v19" stroke="#e5e5e5" strokeWidth=".7"/></I>,
  Views: () => <I w={17} h={17}><rect width="17" height="17" fill="#4f7fb8"/><rect x="1" y="1" width="7" height="7" fill="#9cc1e8"/><rect x="9" y="1" width="7" height="7" fill="#9cc1e8"/><rect x="1" y="9" width="7" height="7" fill="#7aa6d6"/><rect x="9" y="9" width="7" height="7" fill="#7aa6d6"/></I>,
};

const groupData: { label: string; w: number; gap?: number; last?: boolean; icons: React.ReactNode[] }[] = [
  { label: "CREAR", w: 280, icons: [<SketchI key="a"/>, <ExtrudeI key="b"/>, <RevolveI key="c"/>, <HoleI key="d"/>, <NodesI key="e"/>, <FormI key="f"/>] },
  { label: "AUTOMATIZAR", w: 119, icons: [<AutoI key="a"/>] },
  { label: "MODIFICAR", w: 234, icons: [<PressI key="a"/>, <FilletI key="b"/>, <ShellI key="c"/>, <CombineI key="d"/>, <SplitI key="e"/>] },
  { label: "ENSAMBLAR", w: 192, gap: 11, icons: [<JointI key="a"/>, <NewCompI key="b"/>, <RigidI key="c"/>, <TableI key="d"/>] },
  { label: "CONFIGURAR", w: 113, gap: 13, icons: [<ParamI key="a"/>, <ParamTableI key="b"/>] },
  { label: "CONSTRUIR", w: 109, icons: [<PlaneI key="a"/>] },
  { label: "INSPECCIONAR", w: 123, icons: [<MeasureI key="a"/>] },
  { label: "INSERTAR", w: 146, gap: 11, icons: [<LinkI key="a"/>, <BoltI key="b"/>, <PictureI key="c"/>] },
  { label: "SELECCIONAR", w: 120, last: true, icons: [<SelectI key="a"/>] },
];
const modeTabs: [string, number, boolean?][] = [["SOLIDO", 69, true], ["SUPERFICIE", 138], ["MALLA", 68], ["CHAPA", 104], ["PLÁSTICO", 86], ["UTILIDADES", 140], ["ADMINISTRAR", 96]];
const FusionLogo = ({ s }: { s: number }) => <I w={s} h={s} vb="0 0 30 30">
  <rect x="6" y="3" width="22" height="26" rx="2" fill="#8d4d18"/><path d="M3 1h19l3 3v19H3z" fill="#f5811f"/><rect x="6" y="22" width="20" height="7" fill="#7a4a22"/>
  <text x="14" y="16" textAnchor="middle" fontFamily="Liberation Sans" fontWeight="700" fontSize="14" fill="#fff">F</text>
  <text x="16" y="28" textAnchor="middle" fontFamily="Liberation Sans" fontWeight="700" fontSize="5" fill="#ddd">FUSI</text>
</I>;

const taskIcons: { node: React.ReactNode; dot?: boolean }[] = [
  { node: <I w={25} h={26}><defs><linearGradient id="cp" x1="0" y1="0" x2="1" y2="1"><stop offset="0" stopColor="#3fa3f0"/><stop offset=".5" stopColor="#57c77b"/><stop offset="1" stopColor="#f6b53a"/></linearGradient></defs><path d="M8 1h6c3 0 4 2 5 4l5 13c1 3-1 7-5 7h-2l-5-14-4-2C6 6 6 2 8 1z" fill="url(#cp)"/><path d="M2 15c0-4 4-6 6-3l6 11c-1 2-3 3-5 2H6c-3-1-5-6-4-10z" fill="#e2547e"/><path d="M8 1h6c2 0 3 2 4 4l3 7-6-2-7-3C7 5 7 2 8 1z" fill="#4c8ff0"/></I> },
  { node: <I w={26} h={28}><defs><linearGradient id="eg" x1="0" y1="0" x2="1" y2="1"><stop offset="0" stopColor="#55d07c"/><stop offset="1" stopColor="#1b9de2"/></linearGradient></defs><circle cx="13" cy="14" r="13" fill="#0b62b8"/><path d="M2 10C4 3 10 1 14 1c7 0 12 5 12 11 0 4-4 6-7 6-3 0-6-1-6-3 0-1 1-1 1-2 0-3-3-5-6-5-4 0-6 1-6 2z" fill="url(#eg)"/><path d="M13 15c0 5 4 9 11 7-3 4-7 5-11 5-4-1-7-4-8-8-1-3 3-6 8-4z" fill="#2bb4e6"/></I>, dot: true },
  { node: <I w={26} h={24}><path d="M0 2q0-2 2-2h8l3 3h11q2 0 2 2v17q0 2-2 2H2q-2 0-2-2z" fill="#f6d24d"/><path d="M0 2q0-2 2-2h8l3 3-13 1z" fill="#d9a726"/><path d="M9 15h8q1 0 1 1v6H8v-6q0-1 1-1z" fill="#1a7bc4"/></I>, dot: true },
  { node: <I w={26} h={26}><circle cx="13" cy="13" r="13" fill="#dd4a3c"/><path d="M13 13L24.300 19.500A13 13 0 0 1 4 22.300z" fill="#2ca34c"/><path d="M13 0a13 13 0 0 1 11.300 19.500L13 13 19 8z" fill="#f8c21a"/><path d="M13 13L4 22.300A13 13 0 0 1 1.700 6.500z" fill="#2ca34c"/><path d="M2 6.500A13 13 0 0 1 13 0a13 13 0 0 1 11 6.500H13z" fill="#dd4a3c"/><circle cx="13" cy="13" r="6" fill="#fff"/><circle cx="13" cy="13" r="4.600" fill="#3b80ea"/></I>, dot: true },
  { node: <I w={26} h={24}><path d="M12 2l8-2 6 8v10l-6 3-8-6z" fill="#0f6cbd"/><path d="M4 9h21v13q0 2-2 2H6q-2 0-2-2z" fill="#35bdf2"/><path d="M4 9l11 9 10-9v13H6z" fill="#28a8ea"/><rect x="0" y="5" width="13" height="14" rx="1.500" fill="#0a64ad"/><text x="6.500" y="16" textAnchor="middle" fontFamily="Liberation Sans" fontWeight="700" fontSize="10" fill="#fff">O</text></I> },
  { node: <FaWhatsapp size={27} color="#17834f"/>, dot: false },
  { node: <I w={22} h={26}><rect width="22" height="26" rx="3" fill="#a80a00"/><path d="M4 19c4-3 6-8 6-13 0-2-2-2-2 0 0 5 5 9 11 9-4-1-11 0-15 4z" fill="none" stroke="#fff" strokeWidth="1.400"/></I>, dot: true },
  { node: <I w={25} h={26}><path d="M6 0h17q2 0 2 2v22q0 2-2 2H6z" fill="#1c58ad"/><rect x="6" width="19" height="7" fill="#3e96ea"/><rect x="6" y="7" width="19" height="6" fill="#2272d0"/><rect y="6" width="13" height="14" rx="1.500" fill="#185abd"/><WordMark x="6.500" y="17" textAnchor="middle" fill="#fff">W</WordMark></I>, dot: true },
];

export default function App() {
  return (
    <Shell>
      <Global/>
      <Title>
        <FusionLogo s={17}/>
        <TitleText>porta celu v1* (JUANG) - Autodesk Fusion (Licencia educativa)</TitleText>
        <WinButtons>
          <WinButton><I w={12} h={2}><rect width="12" height="1.200" fill="#222"/></I></WinButton>
          <WinButton><I w={11} h={11}><rect x=".5" y="2.500" width="8" height="8" rx="1.500" fill="none" stroke="#222"/><path d="M3 .5h5.500q2 0 2 2V8" fill="none" stroke="#222"/></I></WinButton>
          <WinButton><I w={12} h={12}><path d="M1 1l10 10M11 1L1 11" stroke="#222"/></I></WinButton>
        </WinButtons>
      </Title>
      <TabStrip>
        <QuickIcons>
          <Quick $w={36}><I w={15} h={15}>{[0,5.500,11].flatMap(x=>[0,5.500,11].map(y=><rect key={`${x}-${y}`} x={x} y={y} width="4.500" height="4.500" fill="#666"/>))}</I></Quick>
          <Quick $w={45}><I w={14} h={16}><path d="M0 0h9l5 5v11H0z" fill="#777"/></I><I w={12} h={6}><path d="M4 0h7L7.500 5z" fill="#777"/></I></Quick>
          <Quick $w={36}><I w={15} h={15}><path d="M0 0h12l3 3v12H0z" fill="#777"/><rect x="3" y="1" width="8" height="5" fill="#cacaca"/><rect x="4" y="9" width="7" height="6" fill="#cacaca"/></I></Quick>
          <Quick $w={40}><I w={17} h={13}><path d="M1 5l5-4v3c6 0 9 3 10 9-2-3-5-4-10-4v2z" fill="#777"/></I><I w={12} h={6}><path d="M3 0h7L6.500 5z" fill="#777"/></I></Quick>
          <Quick $w={30}><I w={17} h={13}><path d="M16 5l-5-4v3C5 4 2 7 1 13c2-3 5-4 10-4v2z" fill="#777"/></I><I w={10} h={6}><path d="M1 0h7L4.500 5z" fill="#777"/></I></Quick>
        </QuickIcons>
        <HomeTab><I w={16} h={14}><path d="M8 0l8 7h-2v7h-4v-4H6v4H2V7H0z" fill="#8b8b8b"/></I></HomeTab>
        <DocTab>
          <I w={15} h={16}><path d="M7.500 0L15 3.500v8.500L7.500 16 0 12V3.500z" fill="#f08a24"/><path d="M7.500 0L15 3.500 7.500 7.500 0 3.500z" fill="#fbb36b"/><path d="M7.500 7.500L15 3.500v8.500L7.500 16z" fill="#dc6f11"/></I>
          <DocName>porta celu v1*</DocName>
          <DocClose><I w={11} h={11}><path d="M1 1l9 9M10 1l-9 9" stroke="#777" strokeWidth="1.200"/></I></DocClose>
        </DocTab>
        <PlusTab><I w={13} h={13}><path d="M5 0h3v5h5v3H8v5H5V8H0V5h5z" fill="#8a8a8a"/></I></PlusTab>
        <StatusIcons>
          <StatusSlot $w={38}><I w={17} h={17}><circle cx="8.500" cy="8.500" r="7" fill="none" stroke="#666" strokeWidth="2.200"/><path d="M4 5l5 3 4-4 1 4-4 2-3 3z" fill="#666"/></I></StatusSlot>
          <StatusSlot $w={51} $pad={8}><I w={16} h={16}><circle cx="8" cy="8" r="7.200" fill="#9a9a9a" stroke="#666"/><circle cx="8" cy="8" r="5.200" fill="#ddd" stroke="#555"/><path d="M8 4.500V8h3" fill="none" stroke="#444"/></I><span>&nbsp;1</span></StatusSlot>
          <StatusSlot $w={34}><I w={15} h={17}><path d="M7.500 2c3 0 5 2 5 6v3l2 2.500H.5L2.500 11V8c0-4 2-6 5-6z" fill="#6d6d6d"/><circle cx="7.500" cy="15.500" r="1.500" fill="#6d6d6d"/><circle cx="11.500" cy="3.500" r="3.300" fill="#0696d7"/></I></StatusSlot>
          <StatusSlot $w={32}><I w={17} h={17}><circle cx="8.500" cy="8.500" r="8.500" fill="#666"/><text x="8.500" y="13" textAnchor="middle" fontFamily="Liberation Sans" fontWeight="700" fontSize="12" fill="#e4e4e4">?</text></I></StatusSlot>
          <StatusSlot $w={56}><I w={24} h={26}><defs><linearGradient id="av" x1="0" y1="0" x2="1" y2="0"><stop offset="0" stopColor="#7f93ad"/><stop offset="1" stopColor="#b7c6d9"/></linearGradient></defs><ellipse cx="12" cy="13" rx="12" ry="13" fill="url(#av)"/><ellipse cx="12" cy="10" rx="5.500" ry="7" fill="#4b5d75"/><path d="M3 23c2-5 5-6 9-6s7 1 9 6c-5 4-13 4-18 0z" fill="#4b5d75"/></I></StatusSlot>
        </StatusIcons>
      </TabStrip>
      <Toolbar>
        <DesignButton>DISEÑO <Caret $s={3.500} $c="#444"/></DesignButton>
        <ToolArea>
          <ModeTabs>{modeTabs.map(([t, w, on]) => <ModeTab key={t} $w={w} $on={on}>{t}</ModeTab>)}</ModeTabs>
          <Groups>
            {groupData.map(g => (
              <Group key={g.label} $w={g.w} $last={g.last}>
                <IconRow $gap={g.gap}>{g.icons}</IconRow>
                <GroupLabel>{g.label}<Caret $s={3.500}/></GroupLabel>
              </Group>
            ))}
          </Groups>
        </ToolArea>
      </Toolbar>
      <Viewport>
        <Model/>
        <PanelBar>
          <I w={13} h={7}><path d="M6 0v7L0 3.500zM13 0v7L7 3.500z" fill="#444"/></I>
          <PanelTitle $pad={5}>NAVEGADOR</PanelTitle>
          <CircleBtn/>
        </PanelBar>
        <Tree>
          <TreeRootLine>
            <Expander $w={20}><I w={10} h={8}><path d="M9 0v7H1z" fill="#222"/></I></Expander>
            <TreeChip $w={166}>
              <ChipSlot $w={14}><Eye/></ChipSlot>
              <Selected>
                <I w={14} h={14}><path d="M0 3l3-3h11v11l-3 3H0z" fill="#dfe3ea" stroke="#777"/><path d="M0 3l3-3h11l-3 3zM11 3l3-3v11l-3 3z" fill="#bcc3cc"/></I>
                <ChipLabel $m={15}>porta celu v1</ChipLabel>
              </Selected>
              <ChipSlot $w={24}><I w={16} h={16}><circle cx="8" cy="8" r="7.300" fill="#eee" stroke="#777"/><circle cx="8" cy="8" r="3" fill="#444"/></I></ChipSlot>
            </TreeChip>
          </TreeRootLine>
          <TreeLine>
            <Expander $w={17}><Chev/></Expander>
            <TreeChip $w={190}><ChipSlot $w={16}><Gear/></ChipSlot><ChipLabel $m={11}>Configuración del documento</ChipLabel></TreeChip>
          </TreeLine>
          <TreeLine>
            <Expander $w={17}><Chev/></Expander>
            <TreeChip $w={136}><Folder/><ChipLabel $m={14}>Vistas guardadas</ChipLabel></TreeChip>
          </TreeLine>
          {[["Origen", 108, true], ["Cuerpos", 116, false], ["Bocetos", 112, false]].map(([t, w, off]) => (
            <TreeLine key={t as string}>
              <Expander $w={17}><Chev/></Expander>
              <TreeChip $w={w as number}><ChipSlot $w={25} $start><Eye off={off as boolean}/></ChipSlot><Folder/><ChipLabel $m={15}>{t as string}</ChipLabel></TreeChip>
            </TreeLine>
          ))}
        </Tree>
        <ViewCube/>
        <PanelBar $bottom>
          <PanelTitle $pad={18}>COMENTARIOS</PanelTitle>
          <CircleBtn plus/>
        </PanelBar>
        <NavBar>
          <NavSlot $w={35}><NavIcons.Orbit/><Caret $s={3.500} $c="#333"/></NavSlot>
          <NavSlot $w={28}><NavIcons.Look/></NavSlot>
          <NavSlot $w={26}><NavIcons.Hand/></NavSlot>
          <NavSlot $w={26}><NavIcons.Zoom/></NavSlot>
          <NavSlot $w={35}><NavIcons.Fit/><Caret $s={3.500} $c="#333"/></NavSlot>
          <NavSlot $w={32}><NavIcons.Display/><Caret $s={3.500} $c="#333"/></NavSlot>
          <NavSlot $w={32}><NavIcons.Grid/><Caret $s={3.500} $c="#333"/></NavSlot>
          <NavSlot $w={24}><NavIcons.Views/><Caret $s={3.500} $c="#333"/></NavSlot>
        </NavBar>
        <Bubble><I w={11} h={9}><path d="M0 7l4-5 1 2 3-3-2 5-2-1-2 3zM5 8l4-4 2 1-3 3z" fill="#ddd"/></I></Bubble>
      </Viewport>
      <Timeline>
        <Controls>
          <ControlBtn><I w={13} h={13}><rect width="2.500" height="13" fill="#666"/><path d="M13 0v13L3 6.500z" fill="#666"/></I></ControlBtn>
          <ControlBtn><I w={14} h={13}><path d="M9 0v13L0 6.500z" fill="#666"/><rect x="11" y="3" width="2" height="7" fill="#666"/></I></ControlBtn>
          <ControlBtn><I w={13} h={15}><path d="M0 0l13 7.500L0 15z" fill="#666"/></I></ControlBtn>
          <ControlBtn><I w={14} h={13}><path d="M5 0v13l9-6.500z" fill="#666"/><rect x="1" y="3" width="2" height="7" fill="#666"/></I></ControlBtn>
          <ControlBtn><I w={13} h={13}><path d="M0 0v13l10-6.500z" fill="#666"/><rect x="10.500" width="2.500" height="13" fill="#666"/></I></ControlBtn>
        </Controls>
        <Track>
          <TrackItem><I w={17} h={17}><rect x=".5" y=".5" width="14" height="14" fill="#eef4fb" stroke="#4b95d3" strokeDasharray="2 1"/><path d="M4 4h7M9 4c0 3-1 5-4 6" stroke="#666" fill="none"/><path d="M8 14l6-6 2 2-6 6-3 1z" fill="#f0a030" stroke="#c0392b" strokeWidth=".5"/></I></TrackItem>
          {[0,1,2,3].map(k => <TrackItem key={k}><Mini/></TrackItem>)}
          <TrackItem><Mini fillet/></TrackItem>
          {[0,1,2].map(k => <TrackItem key={k}><Mini/></TrackItem>)}
          <Ruler width="204" height="9"><path d="M.5 0v7.500h201V0M25.500 1v6M50.500 1v6M75.500 1v6M100.500 1v6M125.500 1v6M150.500 1v6M175.500 1v6" fill="none" stroke="#c8c8c8" strokeWidth="1.500"/></Ruler>
          <Marker width="14" height="35"><path d="M1 0h12v4l-5 5v26H6V9L1 4z" fill="#5c5c5c"/></Marker>
        </Track>
        <TimelineGear><Gear s={17}/></TimelineGear>
      </Timeline>
      <Taskbar>
        <Weather>
          <I w={25} h={25}><path d="M0 16c5 2 13 0 17-5 2-3 2-6 1-8 6 3 7 11 3 15-4 6-16 8-21-2z" fill="#ee9a22"/></I>
          <WeatherBadge>1</WeatherBadge>
          <WeatherText>11°C<WeatherSub>Despejado</WeatherSub></WeatherText>
        </Weather>
        <TaskCell $w={46}>
          <I w={24} h={25}><defs><linearGradient id="wn" x1="0" y1="0" x2="1" y2="1"><stop offset="0" stopColor="#49c4f5"/><stop offset="1" stopColor="#0a78d6"/></linearGradient></defs><rect width="11.500" height="12" fill="url(#wn)"/><rect x="12.500" width="11.500" height="12" fill="url(#wn)"/><rect y="13" width="11.500" height="12" fill="url(#wn)"/><rect x="12.500" y="13" width="11.500" height="12" fill="url(#wn)"/></I>
        </TaskCell>
        <Search>
          <I w={18} h={19}><circle cx="8" cy="8" r="6.200" fill="none" stroke="#222" strokeWidth="1.700"/><path d="M12.500 12.500L17 18" stroke="#222" strokeWidth="1.800"/></I>
          <SearchText>Buscar</SearchText>
          <SearchArt width="52" height="30"><path d="M14 18l6-3 3-9 3 3 3-2 3 3h14l5 7v13H12z" fill="#9b9ea3"/><rect x="20" y="11" width="28" height="9" fill="#c9ccd0"/><path d="M2 30c2-7 8-10 16-9 6 0 14-2 20 0 6 1 12 4 14 9z" fill="#5c8a39"/><path d="M16 30l7-8 5 0 4 8z" fill="#d9d3b8"/><circle cx="9" cy="26" r="3" fill="#c6613d"/><circle cx="41" cy="26" r="3" fill="#c98a3d"/></SearchArt>
        </Search>
        <TaskCell $w={48}><I w={24} h={24}><rect x="8" y="0" width="16" height="18" fill="#f0f2f2"/><rect x="0" y="7" width="15" height="17" rx="1" fill="#2a2a2a"/><rect x="8" y="7" width="7" height="11" fill="#bfc4c4"/></I></TaskCell>
        <TaskGap/>
        {taskIcons.map((t, k) => <TaskCell key={k} $w={45.800}>{t.node}{t.dot && <RunDot/>}</TaskCell>)}
        <TaskCell $w={45.800} $active><FusionLogo s={28}/><RunDot $w={16}/></TaskCell>
        <Tray>
          <TraySlot $w={24}><I w={13} h={8}><path d="M1 7l5.500-5.500L12 7" fill="none" stroke="#222" strokeWidth="1.300"/></I></TraySlot>
          <TraySlot $w={42}><I w={18} h={17}><path d="M2 11c-3-1-2-6 2-6 1-3 6-4 8-1 3 0 4 4 2 7z" fill="#6d6f70" stroke="#333" strokeWidth=".5"/><circle cx="12.500" cy="11.500" r="5" fill="#d7262e"/><path d="M10.500 9.500l4 4M14.500 9.500l-4 4" stroke="#fff" strokeWidth="1.100"/></I></TraySlot>
          <TraySlot $w={38}>ESP</TraySlot>
          <TraySlot $w={30} $m={5}><I w={17} h={14}><g fill="none" stroke="#222" strokeWidth="1.100"><path d="M.8 5a11 11 0 0 1 15.400 0"/><path d="M3.300 7.500a7.500 7.500 0 0 1 10.400 0"/><path d="M5.800 10a4 4 0 0 1 5.400 0"/></g><circle cx="8.500" cy="12.500" r="1.200" fill="#222"/></I></TraySlot>
          <TraySlot $w={20}><I w={16} h={12}><path d="M1 4h2.500L7 .8v10.400L3.500 8H1z" fill="none" stroke="#333"/><path d="M10 4l4.500 4.500M14.500 4L10 8.500" stroke="#333"/></I></TraySlot>
          <TraySlot $w={30}><I w={17} h={10}><rect x=".5" y=".5" width="13.500" height="9" rx="1.500" fill="none" stroke="#222"/><rect x="2" y="2" width="5" height="6" fill="#222"/><rect x="14.500" y="3" width="2" height="4" fill="#222"/></I></TraySlot>
          <Clock>22:55<br/>29/4/2025</Clock>
        </Tray>
      </Taskbar>
    </Shell>
  );
}
